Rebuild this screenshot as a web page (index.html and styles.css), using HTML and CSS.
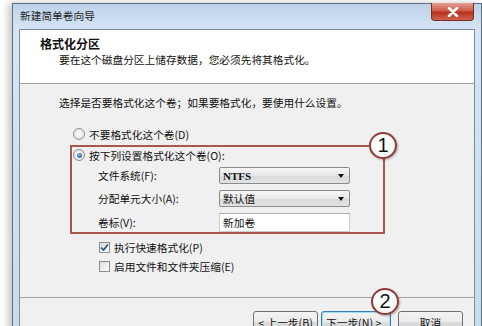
FILE: index.html
```html
<!doctype HTML>
<html>
    <head>
        <title>新建简单卷向导</title>
        <meta content="text/html;charset=utf-8" http-equiv="Content-Type">
        <link rel="stylesheet" href="styles.css">
    </head>

    <body>
        <div class="window">
            <div class="titlebar">
                <span class="title">新建简单卷向导</span>
                <span class="close">
                    <svg width="12" height="10" viewBox="0 0 12 10"><path d="M2 1 L10 9 M10 1 L2 9" stroke="#fff" stroke-width="2.6" stroke-linecap="round"/></svg>
                </span>
            </div>

            <div class="client">
                <div class="header">
                    <h1>格式化分区</h1>
                    <p>要在这个磁盘分区上储存数据，您必须先将其格式化。</p>
                </div>

                <div class="content">
                    <p class="intro">选择是否要格式化这个卷；如果要格式化，要使用什么设置。</p>

                    <div class="option first"><span class="radio"></span>不要格式化这个卷(D)</div>

                    <div class="settings">
                        <div class="option"><span class="radio on"></span>按下列设置格式化这个卷(O):</div>
                        <div class="fields">
                            <span>文件系统(F):</span>
                            <span class="select latin">NTFS<i></i></span>
                            <span>分配单元大小(A):</span>
                            <span class="select">默认值<i></i></span>
                            <span>卷标(V):</span>
                            <span class="input">新加卷</span>
                        </div>
                        <span class="callout one">1</span>
                    </div>

                    <div class="check first">
                        <span class="box"><svg width="9" height="9" viewBox="0 0 9 9"><path d="M1 4.5 L3.5 7 L8 1.5" fill="none" stroke="#2b4c78" stroke-width="1.6"/></svg></span>执行快速格式化(P)
                    </div>
                    <div class="check"><span class="box"></span>启用文件和文件夹压缩(E)</div>
                </div>

                <div class="footer">
                    <span class="callout two">2</span>
                    <button>&lt; 上一步(B)</button>
                    <button class="default">下一步(N) &gt;</button>
                    <button class="cancel">取消</button>
                </div>
            </div>
        </div>
    </body>
</html>
```

FILE: styles.css
```css
html, body {
    margin: 0;
    height: 326px;
    overflow: hidden;
    background: #fff;
}

body {
    font-family: "Noto Sans CJK SC", "Liberation Sans", sans-serif;
    font-size: 10.7px;
    color: #111;
}

.window {
    margin: 3px 0 0 12px;
    width: 470px;
    height: 340px;
    box-sizing: border-box;
    border: 1px solid #5f6f80;
    border-bottom: none;
    padding: 0 6px;
    background: linear-gradient(#bcd2ea, #d6e5f4 26px, #c8daee);
    box-shadow: -4px 0 7px rgba(0, 0, 0, 0.22);
}

.titlebar {
    position: relative;
    height: 25px;
    padding: 4px 0 0 1px;
    box-sizing: border-box;
}

.title {
    line-height: 14px;
    color: #1e1e1e;
}

.close {
    position: absolute;
    top: -1px;
    right: 1px;
    width: 41px;
    height: 17px;
    display: flex;
    align-items: center;
    justify-content: center;
    border: 1px solid #7d2a22;
    border-top: none;
    border-radius: 0 0 4px 4px;
    background: linear-gradient(#e6a195, #d05a48 45%, #b8301f 55%, #d0624c);
}

.client {
    border: 1px solid #7e8d9c;
    background: #f0f0f0;
    height: 320px;
}

.header {
    background: #fff;
    height: 54px;
    box-sizing: border-box;
    border-bottom: 1px solid #a2a2a2;
    padding: 6px 0 0 20px;
}

.header h1 {
    margin: 0;
    font-size: 12px;
    line-height: 16px;
    font-weight: bold;
}

.header p {
    margin: 1px 0 0 19px;
    line-height: 14px;
}

.content {
    height: 214px;
    box-sizing: border-box;
    padding-top: 12px;
    border-bottom: 1px solid #a2a2a2;
}

.intro {
    margin: 0 0 17px 39px;
    line-height: 14px;
}

.option, .check {
    display: flex;
    align-items: center;
    gap: 4px;
    height: 14px;
}

.option.first {
    margin-left: 53px;
}

.radio {
    width: 10px;
    height: 10px;
    border: 1px solid #8d8d8d;
    border-radius: 50%;
    background: radial-gradient(#fdfdfd, #dcdcdc);
    display: flex;
    align-items: center;
    justify-content: center;
}

.radio.on::after {
    content: "";
    width: 5px;
    height: 5px;
    border-radius: 50%;
    background: radial-gradient(circle at 40% 35%, #7fb2e6, #1d4f8f);
}

.settings {
    position: relative;
    margin: 4px 0 0 50px;
    width: 315px;
    height: 89px;
    box-sizing: border-box;
    border: 2px solid #a9564f;
    padding: 1px 0 0 1px;
}

.fields {
    display: grid;
    grid-template-columns: 121px 131px;
    grid-template-rows: 17px 17px 19px;
    row-gap: 6px;
    align-items: center;
    margin: 5px 0 0 25px;
}

.select {
    height: 17px;
    box-sizing: border-box;
    border: 1px solid #8a8a8a;
    border-radius: 2px;
    background: linear-gradient(#f6f6f6, #e8e8e8 50%, #dadada 51%, #e2e2e2);
    display: flex;
    align-items: center;
    justify-content: space-between;
    padding: 0 5px 0 3px;
}

.select.latin {
    font-family: "Liberation Serif", serif;
    font-size: 11px;
    font-weight: bold;
}

.select i {
    width: 0;
    height: 0;
    border-left: 3px solid transparent;
    border-right: 3px solid transparent;
    border-top: 4px solid #111;
}

.input {
    height: 19px;
    box-sizing: border-box;
    border: 1px solid #c9ccd2;
    border-top-color: #abadb3;
    background: #fff;
    display: flex;
    align-items: center;
    padding-left: 3px;
}

.callout {
    position: absolute;
    width: 28px;
    height: 27px;
    box-sizing: border-box;
    border: 2px solid #8e3c36;
    border-radius: 50%;
    background: radial-gradient(circle at 45% 40%, #fff 40%, #e4e4e4);
    box-shadow: 1px 1px 2px rgba(0, 0, 0, 0.3);
    font-family: "Liberation Sans", sans-serif;
    font-size: 20px;
    line-height: 23px;
    text-align: center;
    color: #111;
}

.callout.one {
    top: -15px;
    right: -14px;
}

.callout.two {
    top: -10px;
    left: 351px;
    z-index: 1;
}

.check {
    margin: 5px 0 0 79px;
}

.check.first {
    margin-top: 6px;
}

.box {
    width: 11px;
    height: 11px;
    box-sizing: border-box;
    border: 1px solid #8e8e8e;
    background: linear-gradient(135deg, #dcdcdc, #fbfbfb);
    display: flex;
    align-items: center;
    justify-content: center;
}

.footer {
    position: relative;
    display: flex;
    justify-content: flex-end;
    padding: 13px 11px 0 0;
}

.footer button {
    width: 65px;
    height: 22px;
    margin-left: 3px;
    border: 1px solid #707070;
    border-radius: 3px;
    background: linear-gradient(#f3f3f3, #ebebeb 50%, #dddddd 51%, #cfcfcf);
    font-family: inherit;
    font-size: 10.7px;
    color: #111;
    padding: 0;
}

.footer button.default {
    width: 70px;
    border-color: #3c7fb1;
    box-shadow: inset 0 0 0 1px #9fdcf8;
    text-align: left;
    padding-left: 4px;
}

.footer button.cancel {
    margin-left: 7px;
}
```
